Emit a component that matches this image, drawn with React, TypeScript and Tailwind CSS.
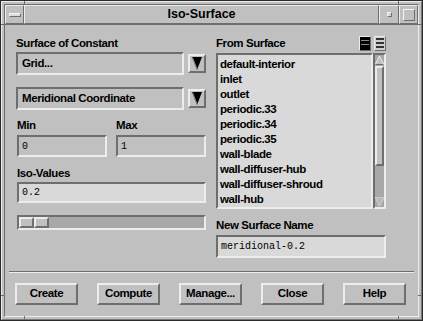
import React from "react";

const raised =
  "border-2 border-t-[#ececec] border-l-[#ececec] border-b-[#6e6e6e] border-r-[#6e6e6e]";
const sunken =
  "border-2 border-t-[#6e6e6e] border-l-[#6e6e6e] border-b-[#ececec] border-r-[#ececec]";
const raised1 =
  "border border-t-[#ececec] border-l-[#ececec] border-b-[#6e6e6e] border-r-[#6e6e6e]";

function Label({ children }: { children: React.ReactNode }) {
  return (
    <div className="h-[14px] leading-[14px] text-[11.5px] font-bold tracking-[-0.4px] text-black whitespace-nowrap">
      {children}
    </div>
  );
}

function ArrowBtn() {
  return (
    <div className={`w-[18px] h-[19px] ${raised} flex items-center justify-center bg-[#c0c0c0]`}>
      <svg width="10" height="13" viewBox="0 0 10 13">
        <polygon points="0,0 10,0 5,13" fill="#000" />
        <polyline points="0.5,0.5 5,12" stroke="#8a8a8a" strokeWidth="1" fill="none" />
      </svg>
    </div>
  );
}

function Dropdown({ text }: { text: string }) {
  return (
    <div className="flex items-center gap-[4px]">
      <div
        className={`w-[168px] h-[23px] ${sunken} flex items-center pl-[4px] text-[11.5px] font-bold tracking-[-0.4px]`}
      >
        {text}
      </div>
      <ArrowBtn />
    </div>
  );
}

function Field({ value, w, light, h = 22 }: { value: string; w: string; light?: boolean; h?: number }) {
  return (
    <div
      className={`${w} ${sunken} flex items-center pl-[3px] font-['Liberation_Mono',monospace] text-[10px] ${
        light ? "bg-[#d9d9d9]" : "bg-[#c0c0c0]"
      }`}
      style={{ height: h }}
    >
      {value}
    </div>
  );
}

function Btn({ label }: { label: string }) {
  return (
    <div
      className={`w-[63px] h-[22px] ${raised} flex items-center justify-center text-[11.5px] font-bold tracking-[-0.4px]`}
    >
      {label}
    </div>
  );
}

const items = [
  "default-interior",
  "inlet",
  "outlet",
  "periodic.33",
  "periodic.34",
  "periodic.35",
  "wall-blade",
  "wall-diffuser-hub",
  "wall-diffuser-shroud",
  "wall-hub",
];

function Tick({ className }: { className: string }) {
  return <div className={`absolute ${className}`} />;
}

export default function App() {
  return (
    <div className="w-[423px] h-[321px] relative bg-[#c0c0c0] border border-[#2a2a2a] font-['Liberation_Sans',Arial,sans-serif] text-black">
      <div className="w-full h-full border border-t-[#ececec] border-l-[#ececec] border-b-[#7a7a7a] border-r-[#7a7a7a] p-[2px] flex flex-col">
        <div className="flex-1 flex flex-col border border-t-[#6e6e6e] border-l-[#6e6e6e] border-b-[#ececec] border-r-[#ececec]">
          {/* Title bar */}
          <div className="h-[20px] flex border-b border-b-[#6e6e6e]">
            <div className={`w-[19px] h-full ${raised1} flex items-center justify-center`}>
              <div className="w-[12px] h-[4px] bg-[#dcdcdc] border-b border-r border-b-[#6e6e6e] border-r-[#6e6e6e] border-t border-l border-t-[#f4f4f4] border-l-[#f4f4f4]" />
            </div>
            <div className={`flex-1 h-full ${raised1} flex items-center justify-center text-[12.5px] font-bold`}>
              Iso-Surface
            </div>
            <div className={`w-[20px] h-full ${raised1} flex items-center justify-center`}>
              <div className="w-[5px] h-[5px] bg-[#d8d8d8] border border-t-[#f4f4f4] border-l-[#f4f4f4] border-b-[#6e6e6e] border-r-[#6e6e6e]" />
            </div>
            <div className={`w-[19px] h-full ${raised1} flex items-center justify-center`}>
              <div className="w-[12px] h-[12px] border border-t-[#f4f4f4] border-l-[#f4f4f4] border-b-[#6e6e6e] border-r-[#6e6e6e]" />
            </div>
          </div>

          {/* Content */}
          <div className="flex-1 flex flex-col pt-[11px]">
            <div className="flex pl-[11px] gap-[10px]">
              {/* Left column */}
              <div className="w-[190px] flex flex-col">
                <Label>Surface of Constant</Label>
                <div className="mt-[2px]">
                  <Dropdown text="Grid..." />
                </div>
                <div className="mt-[12px]">
                  <Dropdown text="Meridional Coordinate" />
                </div>
                <div className="flex gap-[9px] mt-[8px] pl-[1px]">
                  <div className="flex flex-col gap-[3px]">
                    <Label>Min</Label>
                    <Field value="0" w="w-[90px]" />
                  </div>
                  <div className="flex flex-col gap-[3px]">
                    <Label>Max</Label>
                    <Field value="1" w="w-[90px]" />
                  </div>
                </div>
                <div className="mt-[9px] pl-[1px] flex flex-col gap-[2px]">
                  <Label>Iso-Values</Label>
                  <Field value="0.2" w="w-[189px]" light h={21} />
                </div>
                <div className={`mt-[12px] ml-[1px] w-[189px] h-[15px] ${sunken} bg-[#a8a8a8] flex items-stretch`}>
                  <div className={`w-[15px] ${raised} bg-[#c0c0c0]`} />
                  <div className={`w-[15px] ${raised} bg-[#c0c0c0]`} />
                </div>
              </div>

              {/* Right column */}
              <div className="w-[170px] flex flex-col">
                <div className="flex items-center justify-between h-[14px]">
                  <Label>From Surface</Label>
                  <div className="flex gap-[3px]">
                    <div className={`w-[12px] h-[15px] border border-t-[#ececec] border-l-[#ececec] border-b-[#6e6e6e] border-r-[#6e6e6e] bg-[#000] flex flex-col justify-center gap-[1px] px-[1px]`}>
                      <div className="h-[3px] bg-black border-b border-[#888]" />
                      <div className="h-[3px] bg-black border-b border-[#888]" />
                      <div className="h-[3px] bg-black" />
                    </div>
                    <div className={`w-[12px] h-[15px] border border-t-[#ececec] border-l-[#ececec] border-b-[#6e6e6e] border-r-[#6e6e6e] bg-[#d0d0d0] flex flex-col justify-center gap-[2px] px-[1px]`}>
                      <div className="h-[2px] border-t border-b border-[#333]" />
                      <div className="h-[2px] border-t border-b border-[#333]" />
                      <div className="h-[2px] border-t border-b border-[#333]" />
                    </div>
                  </div>
                </div>
                <div className="mt-[3px] flex h-[156px]">
                  <div className={`w-[157px] ${sunken} bg-[#d9d9d9] pt-[2px] pl-[2px] overflow-hidden`}>
                    {items.map((it) => (
                      <div
                        key={it}
                        className="h-[15px] leading-[15px] text-[11.5px] font-bold tracking-[-0.4px] whitespace-nowrap"
                      >
                        {it}
                      </div>
                    ))}
                  </div>
                  <div className={`w-[13px] ${sunken} bg-[#a8a8a8] flex flex-col`}>
                    <div className="h-[11px] flex items-center justify-center">
                      <svg width="9" height="9" viewBox="0 0 9 9">
                        <polygon points="4.5,0 9,9 0,9" fill="#c0c0c0" stroke="#ececec" strokeWidth="1" />
                        <line x1="0.5" y1="8.5" x2="8.5" y2="8.5" stroke="#6e6e6e" />
                      </svg>
                    </div>
                    <div className={`h-[100px] ${raised} bg-[#c0c0c0]`} />
                    <div className="flex-1" />
                    <div className="h-[11px] flex items-center justify-center">
                      <svg width="9" height="9" viewBox="0 0 9 9">
                        <polygon points="0,0 9,0 4.5,9" fill="#b8b8b8" stroke="#d4d4d4" strokeWidth="1" />
                      </svg>
                    </div>
                  </div>
                </div>
                <div className="mt-[9px]">
                  <Label>New Surface Name</Label>
                </div>
                <div className="mt-[3px]">
                  <Field value="meridional-0.2" w="w-[170px]" light h={23} />
                </div>
              </div>
            </div>

            {/* Separator */}
            <div className="mt-[13px] mx-[4px] border-t border-t-[#6e6e6e] border-b border-b-[#ececec]" />

            {/* Buttons */}
            <div className="mt-[10px] pl-[10px] flex gap-[19px]">
              <Btn label="Create" />
              <Btn label="Compute" />
              <Btn label="Manage..." />
              <Btn label="Close" />
              <Btn label="Help" />
            </div>
          </div>
        </div>
      </div>

      {/* Frame resize ticks */}
      <Tick className="left-[23px] top-0 w-[1px] h-[4px] bg-[#6e6e6e]" />
      <Tick className="left-[397px] top-0 w-[1px] h-[4px] bg-[#6e6e6e]" />
      <Tick className="left-[23px] bottom-0 w-[1px] h-[4px] bg-[#6e6e6e]" />
      <Tick className="left-[397px] bottom-0 w-[1px] h-[4px] bg-[#6e6e6e]" />
      <Tick className="left-0 top-[23px] w-[4px] h-[1px] bg-[#6e6e6e]" />
      <Tick className="right-0 top-[23px] w-[4px] h-[1px] bg-[#6e6e6e]" />
      <Tick className="left-0 top-[294px] w-[4px] h-[1px] bg-[#6e6e6e]" />
      <Tick className="right-0 top-[294px] w-[4px] h-[1px] bg-[#6e6e6e]" />
    </div>
  );
}
